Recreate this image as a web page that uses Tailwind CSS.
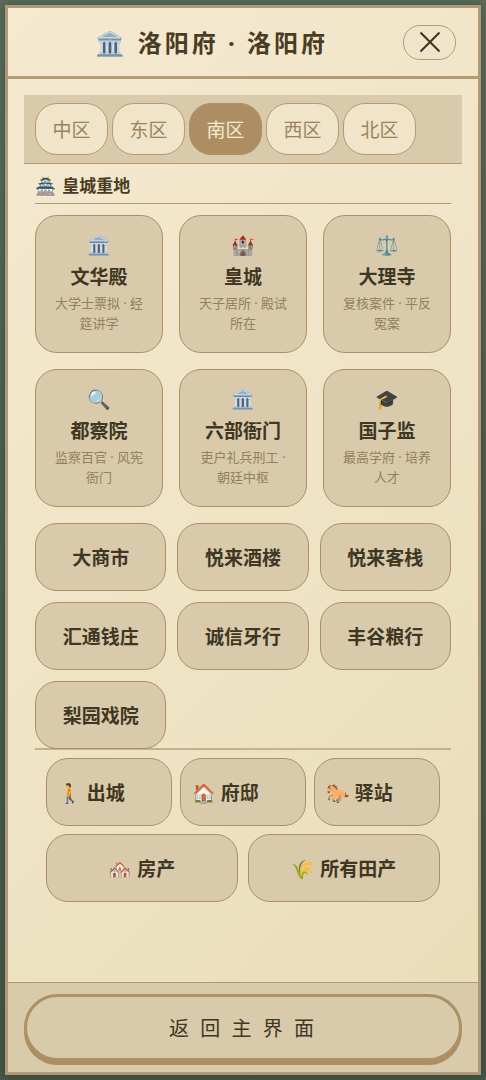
<!DOCTYPE html>
<html lang="zh-CN">
<head>
<meta charset="utf-8">
<meta name="viewport" content="width=device-width, initial-scale=1">
<title>洛阳府</title>
<script src="https://cdn.jsdelivr.net/npm/@tailwindcss/browser@4"></script>
</head>
<body class="min-h-screen flex p-[5px] bg-linear-to-b from-[#5a6c5b] via-[#4d5f50] to-[#46564a] text-[#403722] font-['Noto_Sans','Noto_Sans_CJK_SC','Noto_Color_Emoji',sans-serif]">
<div class="flex-1 min-w-0 flex flex-col border-3 border-[#b09a75] bg-linear-135 from-[#f5e9d0] via-[#efe4c6] to-[#e8dcb8] shadow-[0_0_8px_rgba(0,0,0,0.3)]">

  <header class="flex items-center justify-between h-[71px] pr-[22px] border-b-3 border-[#b39c74]">
    <h1 class="flex-1 flex justify-center items-center gap-2.5 pl-3 pt-0.5 text-2xl font-bold tracking-[3px] text-[#4a3b24]"><span>🏛️</span><span>洛阳府 · 洛阳府</span></h1>
    <button type="button" aria-label="关闭" class="w-[53px] h-[35px] flex items-center justify-center rounded-[17px] border border-[#b39c74] bg-[#f0e5ca]">
      <svg class="size-[22px]" viewBox="0 0 22 22" fill="none" stroke="#3d3524" stroke-width="2"><path d="M1.5 1.5 20.5 20.5M20.5 1.5 1.5 20.5"/></svg>
    </button>
  </header>

  <main class="flex-1 px-4 pt-4">
    <nav class="flex gap-1 px-[11px] py-2 bg-[#d8caab] border-b border-[#b39c74] text-[19px] text-[#9a8460]">
      <button type="button" class="w-[73px] h-[52px] pt-0.5 rounded-[22px] border border-[#b39c74] bg-[#f0e4c9]">中区</button>
      <button type="button" class="w-[73px] h-[52px] pt-0.5 rounded-[22px] border border-[#b39c74] bg-[#f0e4c9]">东区</button>
      <button type="button" aria-pressed="true" class="w-[73px] h-[52px] pt-0.5 rounded-[22px] border border-[#b08f63] bg-[#ad8e62] text-[#f5ebd3]">南区</button>
      <button type="button" class="w-[73px] h-[52px] pt-0.5 rounded-[22px] border border-[#b39c74] bg-[#f0e4c9]">西区</button>
      <button type="button" class="w-[73px] h-[52px] pt-0.5 rounded-[22px] border border-[#b39c74] bg-[#f0e4c9]">北区</button>
    </nav>

    <section class="px-[11px]">
      <h2 class="flex items-center gap-1.5 h-10 pt-1 border-b border-[#b39c74] text-[17px] font-bold text-[#4a3b24]"><span>🏯</span><span>皇城重地</span></h2>
      <div class="grid grid-cols-3 gap-4 mt-[11px]">
        <button type="button" class="h-[138px] px-4 pt-[15px] flex flex-col items-center rounded-[22px] border border-[#ad9063] bg-[#d8caab]">
          <span class="text-[19px] leading-7">🏛️</span><span class="mt-0.5 text-[19px] leading-8 font-bold">文华殿</span><span class="text-[13px] leading-5 text-[#94805d]">大学士票拟 · 经筵讲学</span></button>
        <button type="button" class="h-[138px] px-4 pt-[15px] flex flex-col items-center rounded-[22px] border border-[#ad9063] bg-[#d8caab]">
          <span class="text-[19px] leading-7">🏰</span><span class="mt-0.5 text-[19px] leading-8 font-bold">皇城</span><span class="text-[13px] leading-5 text-[#94805d]">天子居所 · 殿试所在</span></button>
        <button type="button" class="h-[138px] px-4 pt-[15px] flex flex-col items-center rounded-[22px] border border-[#ad9063] bg-[#d8caab]">
          <span class="text-[19px] leading-7">⚖️</span><span class="mt-0.5 text-[19px] leading-8 font-bold">大理寺</span><span class="text-[13px] leading-5 text-[#94805d]">复核案件 · 平反冤案</span></button>
        <button type="button" class="h-[138px] px-4 pt-[15px] flex flex-col items-center rounded-[22px] border border-[#ad9063] bg-[#d8caab]">
          <span class="text-[19px] leading-7">🔍</span><span class="mt-0.5 text-[19px] leading-8 font-bold">都察院</span><span class="text-[13px] leading-5 text-[#94805d]">监察百官 · 风宪衙门</span></button>
        <button type="button" class="h-[138px] px-4 pt-[15px] flex flex-col items-center rounded-[22px] border border-[#ad9063] bg-[#d8caab]">
          <span class="text-[19px] leading-7">🏛️</span><span class="mt-0.5 text-[19px] leading-8 font-bold">六部衙门</span><span class="text-[13px] leading-5 text-[#94805d]">吏户礼兵刑工 · 朝廷中枢</span></button>
        <button type="button" class="h-[138px] px-4 pt-[15px] flex flex-col items-center rounded-[22px] border border-[#ad9063] bg-[#d8caab]">
          <span class="text-[19px] leading-7">🎓</span><span class="mt-0.5 text-[19px] leading-8 font-bold">国子监</span><span class="text-[13px] leading-5 text-[#94805d]">最高学府 · 培养人才</span></button>
      </div>

      <div class="grid grid-cols-3 gap-[11px] mt-4 text-[19px] font-bold">
        <button type="button" class="h-[68px] pt-0.5 rounded-[22px] border border-[#ad9063] bg-[#d8caab]">大商市</button>
        <button type="button" class="h-[68px] pt-0.5 rounded-[22px] border border-[#ad9063] bg-[#d8caab]">悦来酒楼</button>
        <button type="button" class="h-[68px] pt-0.5 rounded-[22px] border border-[#ad9063] bg-[#d8caab]">悦来客栈</button>
        <button type="button" class="h-[68px] pt-0.5 rounded-[22px] border border-[#ad9063] bg-[#d8caab]">汇通钱庄</button>
        <button type="button" class="h-[68px] pt-0.5 rounded-[22px] border border-[#ad9063] bg-[#d8caab]">诚信牙行</button>
        <button type="button" class="h-[68px] pt-0.5 rounded-[22px] border border-[#ad9063] bg-[#d8caab]">丰谷粮行</button>
        <button type="button" class="h-[68px] pt-0.5 rounded-[22px] border border-[#ad9063] bg-[#d8caab]">梨园戏院</button>
      </div>

      <div class="border-t-2 border-[#c4b28c] -mt-px px-[11px] pt-2 text-[19px] font-bold">
        <div class="grid grid-cols-3 gap-2">
          <button type="button" class="h-[68px] px-[11px] pt-0.5 flex items-center gap-[5px] rounded-[22px] border border-[#ad9063] bg-[#d8caab]"><span>🚶</span><span>出城</span></button>
          <button type="button" class="h-[68px] px-[11px] pt-0.5 flex items-center gap-[5px] rounded-[22px] border border-[#ad9063] bg-[#d8caab]"><span>🏠</span><span>府邸</span></button>
          <button type="button" class="h-[68px] px-[11px] pt-0.5 flex items-center gap-[5px] rounded-[22px] border border-[#ad9063] bg-[#d8caab]"><span>🐎</span><span>驿站</span></button>
        </div>
        <div class="grid grid-cols-2 gap-2.5 mt-2">
          <button type="button" class="h-[68px] pt-0.5 flex items-center justify-center gap-[5px] rounded-[22px] border border-[#ad9063] bg-[#d8caab]"><span>🏘️</span><span>房产</span></button>
          <button type="button" class="h-[68px] pt-0.5 flex items-center justify-center gap-[5px] rounded-[22px] border border-[#ad9063] bg-[#d8caab]"><span>🌾</span><span>所有田产</span></button>
        </div>
      </div>
    </section>
  </main>

  <footer class="px-4 py-[11px] border-t border-[#b39c74] bg-[#d8caab]">
    <button type="button" class="block w-full h-[67px] pt-0.5 rounded-full border-3 border-[#ad9063] bg-[#d8caab] shadow-[0_4px_0_#ad8e62] text-xl tracking-[3px]">返 回 主 界 面</button>
  </footer>
</div>
</body>
</html>
